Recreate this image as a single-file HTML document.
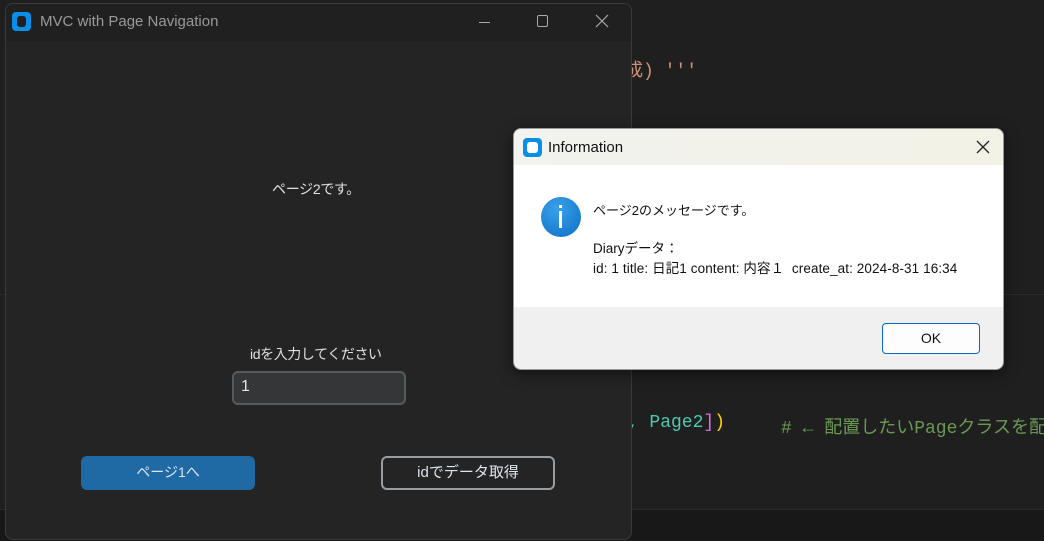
<!DOCTYPE html>
<html><head><meta charset="utf-8"><style>
*{margin:0;padding:0;box-sizing:border-box}
body{width:1044px;height:541px;background:#1f1f1f;position:relative;overflow:hidden;font-family:"Liberation Sans","Noto Sans CJK JP",sans-serif}
.a{position:absolute}
.code{font-family:"Liberation Mono","Noto Sans CJK JP",monospace;font-size:17px;white-space:nowrap}
</style></head><body>
<div class="a" style="left:0;top:509px;width:1044px;height:32px;background:#181818;border-top:1px solid #2b2b2b"></div>
<div class="a" style="left:0;top:294px;width:1044px;height:1px;background:#2b2b2b"></div>
<div class="a code" style="left:200px;top:-12px;color:#6e7681;font-size:14px">12</div>
<div class="a code" style="left:625px;top:56px;color:#ce9178;font-size:18px">成) '''</div>
<div class="a code" style="left:617px;top:413px;color:#4ec9b0;font-size:18px">1, Page2<span style="color:#da70d6">]</span><span style="color:#ffd700">)</span></div>
<div class="a code" style="left:781px;top:413px;color:#6a9955;font-size:18px">#  ← 配置したいPageクラスを配列</div>

<div class="a" style="left:5px;top:3px;width:627px;height:537px;background:#242424;border:1px solid #3a3a3a;border-radius:8px;overflow:hidden">
  <div class="a" style="left:0;top:0;width:100%;height:37px;background:#202020"></div>
  <div class="a" style="left:6px;top:8px;width:19px;height:19px;background:#0a8fe8;border-radius:4px"><div class="a" style="left:5px;top:4px;width:9px;height:11px;background:#202020;border-radius:3px"></div></div>
  <div class="a" style="left:34px;top:9px;color:#9a9a9a;font-size:15px">MVC with Page Navigation</div>
  <div class="a" style="left:473px;top:18px;width:11px;height:1px;background:#aaa"></div>
  <div class="a" style="left:531px;top:11px;width:11px;height:12px;border:1px solid #aaa;border-radius:2px"></div>
  <svg class="a" style="left:589px;top:10px" width="14" height="14"><path d="M1 1L13 13M13 1L1 13" stroke="#aaa" stroke-width="1.2"/></svg>
  <div class="a" style="left:266px;top:175px;color:#e0e0e0;font-size:14px;letter-spacing:-0.3px">ページ2です。</div>
  <div class="a" style="left:244px;top:340px;color:#e0e0e0;font-size:14px;letter-spacing:-0.4px">idを入力してください</div>
  <div class="a" style="left:226px;top:367px;width:174px;height:34px;background:#343638;border:2px solid #565b5e;border-radius:6px;color:#dce4ee;font-size:16px;padding:5px 7px">1</div>
  <div class="a" style="left:75px;top:452px;width:174px;height:34px;background:#1f6aa5;border-radius:6px;color:#dce4ee;font-size:14px;text-align:center;line-height:32px">ページ1へ</div>
  <div class="a" style="left:375px;top:452px;width:174px;height:34px;border:2px solid #979da2;border-radius:6px;color:#dce4ee;font-size:15px;text-align:center;line-height:29px">idでデータ取得</div>
</div>

<div class="a" style="left:513px;top:128px;width:491px;height:242px;background:#f0f0f0;border:1px solid #9a9a9a;border-radius:8px;overflow:hidden;box-shadow:0 4px 14px rgba(0,0,0,.5)">
  <div class="a" style="left:0;top:0;width:100%;height:36px;background:linear-gradient(90deg,#f2f2ee,#f3f2e6)"></div>
  <div class="a" style="left:9px;top:9px;width:19px;height:19px;background:#0a8fe8;border-radius:4px"><div class="a" style="left:4px;top:4px;width:11px;height:11px;background:#fff;border-radius:3px"></div></div>
  <div class="a" style="left:34px;top:10px;color:#111;font-size:15px">Information</div>
  <svg class="a" style="left:462px;top:11px" width="14" height="14"><path d="M1 1L13 13M13 1L1 13" stroke="#222" stroke-width="1.3"/></svg>
  <div class="a" style="left:0;top:36px;width:100%;height:142px;background:#fff"></div>
  <div class="a" style="left:27px;top:68px;width:40px;height:40px;border-radius:50%;background:radial-gradient(circle at 40% 30%,#3aa0ea,#0c6fc6)"><div class="a" style="left:18px;top:8px;width:3px;height:3px;background:#fff"></div><div class="a" style="left:18px;top:14px;width:3px;height:17px;background:#fff"></div></div>
  <div class="a" style="left:79px;top:71px;color:#111;font-size:13px">ページ2のメッセージです。</div>
  <div class="a" style="left:79px;top:108px;color:#111;font-size:13.5px">Diaryデータ：</div>
  <div class="a" style="left:79px;top:128px;color:#111;font-size:13.5px;white-space:nowrap;letter-spacing:0.1px">id: 1 title: 日記1 content: 内容１ &nbsp;create_at: 2024-8-31 16:34</div>
  <div class="a" style="left:368px;top:194px;width:98px;height:31px;background:#fdfdfd;border:1px solid #0a67c0;border-radius:4px;text-align:center;line-height:29px;font-size:14px;color:#111">OK</div>
</div>
</body></html>
